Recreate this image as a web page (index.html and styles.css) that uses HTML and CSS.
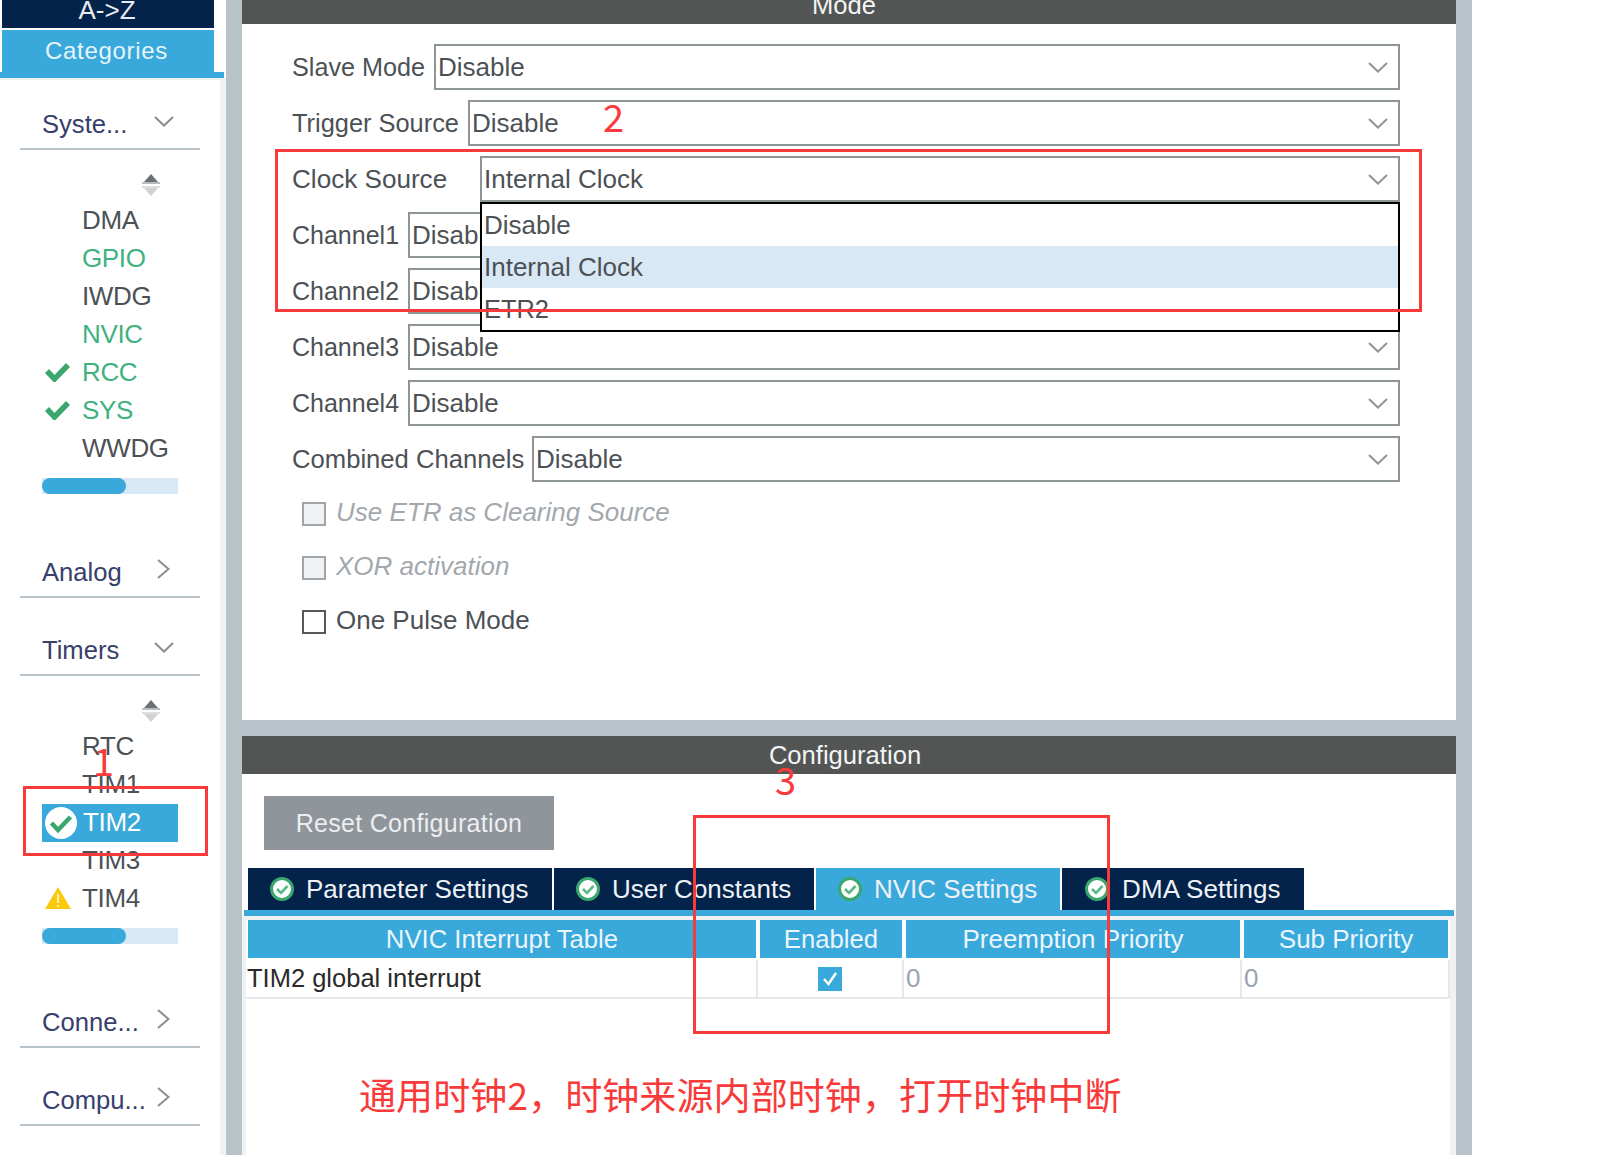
FILE: index.html
```html
<!DOCTYPE html>
<html lang="en">
<head>
<meta charset="utf-8">
<title>Timer configuration</title>
<link rel="stylesheet" href="styles.css">
</head>
<body>
<svg class="defs" width="0" height="0" aria-hidden="true">
  <defs>
    <symbol id="chev-down" viewBox="0 0 20 11"><path d="M1 1 L10 9.5 L19 1" fill="none" stroke="currentColor" stroke-width="2"/></symbol>
    <symbol id="chev-right" viewBox="0 0 13 20"><path d="M1 1 L11.5 10 L1 19" fill="none" stroke="currentColor" stroke-width="2"/></symbol>
    <symbol id="scroll" viewBox="0 0 18 22"><path d="M9 0 L16 8 H2 Z" fill="#6d7072"/><rect x="0" y="8" width="18" height="2" fill="#b9bcbe"/><rect x="0" y="12" width="18" height="2" fill="#dcdedf"/><path d="M2 14 H16 L9 22 Z" fill="#cfd1d2"/></symbol>
    <symbol id="tick" viewBox="0 0 25 20"><path d="M2 9 L9.5 17 L23 3" fill="none" stroke="#3ba76e" stroke-width="5.5"/></symbol>
    <symbol id="ok" viewBox="0 0 24 24"><circle cx="12" cy="12" r="10.5" fill="#fff" stroke="#3aa76e" stroke-width="3"/><path d="M7 12 L11 16 L17.5 9" fill="none" stroke="#57bb88" stroke-width="2.6"/></symbol>
    <symbol id="ok-white" viewBox="0 0 32 32"><circle cx="16" cy="16" r="16" fill="#fff"/><path d="M6.500 16 L13 23 L25.500 10" fill="none" stroke="#3ba76e" stroke-width="4.500"/></symbol>
  </defs>
</svg>
<div class="screen">
  <aside class="side">
    <div class="sort-tab">A-&gt;Z</div>
    <div class="cat-tab">Categories</div>
    <div class="cat-rule"></div>
    <div class="side-body">
      <section class="group group-first">
        <div class="group-head"><span>Syste...</span><svg class="chev-d"><use href="#chev-down"/></svg></div>
        <svg class="scroll"><use href="#scroll"/></svg>
        <ul class="items">
          <li class="item"><span class="slot"></span>DMA</li>
          <li class="item ready"><span class="slot"></span>GPIO</li>
          <li class="item"><span class="slot"></span>IWDG</li>
          <li class="item ready"><span class="slot"></span>NVIC</li>
          <li class="item ready"><span class="slot"><svg class="tick"><use href="#tick"/></svg></span>RCC</li>
          <li class="item ready"><span class="slot"><svg class="tick"><use href="#tick"/></svg></span>SYS</li>
          <li class="item"><span class="slot"></span>WWDG</li>
        </ul>
        <div class="track"><div class="thumb"></div></div>
      </section>
      <section class="group group-after-list">
        <div class="group-head"><span>Analog</span><svg class="chev-r"><use href="#chev-right"/></svg></div>
      </section>
      <section class="group group-after-head">
        <div class="group-head"><span>Timers</span><svg class="chev-d"><use href="#chev-down"/></svg></div>
        <svg class="scroll"><use href="#scroll"/></svg>
        <ul class="items">
          <li class="item"><span class="slot"></span>RTC</li>
          <li class="item"><span class="slot"></span>TIM1</li>
          <li class="item selected"><span class="slot"><svg class="ok-big"><use href="#ok-white"/></svg></span>TIM2</li>
          <li class="item"><span class="slot"></span>TIM3</li>
          <li class="item"><span class="slot"><svg class="warn" viewBox="0 0 26 22"><path d="M13 0 L26 22 H0 Z" fill="#fdc90b"/><rect x="12" y="7" width="2" height="9" fill="#fff3b8"/><rect x="12" y="18" width="2" height="2" fill="#fff3b8"/></svg></span>TIM4</li>
        </ul>
        <div class="track"><div class="thumb"></div></div>
      </section>
      <section class="group group-after-list">
        <div class="group-head"><span>Conne...</span><svg class="chev-r"><use href="#chev-right"/></svg></div>
      </section>
      <section class="group group-after-head">
        <div class="group-head"><span>Compu...</span><svg class="chev-r"><use href="#chev-right"/></svg></div>
      </section>
    </div>
  </aside>

  <main class="work">
    <section class="panel panel-mode">
      <h2 class="title title-mode">Mode</h2>
      <div class="form">
        <div class="row"><label class="lbl lbl-slave">Slave Mode</label><div class="select">Disable<svg class="chev-sel"><use href="#chev-down"/></svg></div></div>
        <div class="row"><label class="lbl lbl-trigger">Trigger Source</label><div class="select">Disable<svg class="chev-sel"><use href="#chev-down"/></svg></div></div>
        <div class="row row-open">
          <label class="lbl lbl-clock">Clock Source</label><div class="select">Internal Clock<svg class="chev-sel"><use href="#chev-down"/></svg></div>
          <ul class="menu">
            <li class="opt">Disable</li>
            <li class="opt opt-on">Internal Clock</li>
            <li class="opt opt-etr">ETR2</li>
          </ul>
        </div>
        <div class="row"><label class="lbl lbl-chan">Channel1</label><div class="select">Disable<svg class="chev-sel"><use href="#chev-down"/></svg></div></div>
        <div class="row"><label class="lbl lbl-chan">Channel2</label><div class="select">Disable<svg class="chev-sel"><use href="#chev-down"/></svg></div></div>
        <div class="row"><label class="lbl lbl-chan">Channel3</label><div class="select">Disable<svg class="chev-sel"><use href="#chev-down"/></svg></div></div>
        <div class="row"><label class="lbl lbl-chan">Channel4</label><div class="select">Disable<svg class="chev-sel"><use href="#chev-down"/></svg></div></div>
        <div class="row"><label class="lbl lbl-comb">Combined Channels</label><div class="select">Disable<svg class="chev-sel"><use href="#chev-down"/></svg></div></div>
        <div class="checks">
          <div class="check check-off"><span class="box"></span><span class="check-text">Use ETR as Clearing Source</span></div>
          <div class="check check-off"><span class="box"></span><span class="check-text">XOR activation</span></div>
          <div class="check"><span class="box"></span><span class="check-text">One Pulse Mode</span></div>
        </div>
      </div>
    </section>

    <section class="panel panel-config">
      <h2 class="title title-config">Configuration</h2>
      <button class="reset" type="button">Reset Configuration</button>
      <div class="tabs">
        <div class="tab tab-param"><svg class="ok"><use href="#ok"/></svg>Parameter Settings</div>
        <div class="tab tab-user"><svg class="ok"><use href="#ok"/></svg>User Constants</div>
        <div class="tab tab-nvic tab-on"><svg class="ok"><use href="#ok"/></svg>NVIC Settings</div>
        <div class="tab tab-dma"><svg class="ok"><use href="#ok"/></svg>DMA Settings</div>
      </div>
      <div class="tab-rule"></div>
      <div class="tab-body">
        <div class="table">
          <div class="th">NVIC Interrupt Table</div>
          <div class="th">Enabled</div>
          <div class="th th-wide">Preemption Priority</div>
          <div class="th th-wide">Sub Priority</div>
          <div class="td td-name">TIM2 global interrupt</div>
          <div class="td td-center"><span class="cb"><svg viewBox="0 0 24 24" class="cb-tick"><path d="M6 12 L10.500 17 L18 6" fill="none" stroke="#fff" stroke-width="2.400"/></svg></span></div>
          <div class="td td-num">0</div>
          <div class="td td-num">0</div>
        </div>
      </div>
    </section>
  </main>

  <div class="mark mark-clock"></div>
  <div class="mark mark-tim2"></div>
  <div class="mark mark-nvic"></div>
  <div class="num num-1">1</div>
  <div class="num num-2">2</div>
  <div class="num num-3">3</div>
  <div class="note">通用时钟2，时钟来源内部时钟，打开时钟中断</div>
</div>
</body>
</html>
```

FILE: styles.css
```css
* { box-sizing: border-box; }
html, body { margin: 0; padding: 0; background: #fff; }
body { font-family: "Liberation Sans", Arial, sans-serif; font-size: 26px; color: #4c5156; }
ul { list-style: none; margin: 0; padding: 0; }
.defs { position: absolute; }

.screen { position: relative; display: flex; width: 1617px; height: 1155px; overflow: hidden; background: #fff; }

/* sidebar */
.side { width: 226px; height: 100%; display: flex; flex-direction: column; flex: none; }
.sort-tab { width: 212px; height: 28px; margin: 0 0 2px 2px; background: #03234b; color: #e8edf2; text-align: center; line-height: 20px; overflow: hidden; padding-right: 2px; }
.cat-tab { width: 212px; height: 42px; margin-left: 2px; background: #39a8db; color: #e6f4fb; text-align: center; line-height: 42px; font-size: 24px; letter-spacing: .7px; padding-right: 3px; }
.cat-rule { width: 224px; height: 6px; background: #39a8db; }
.side-body { flex: 1; border-top: 2px solid #eff1f3; border-right: 6px solid #eff1f3; }
.group { margin: 0 20px; }
.group-first { margin-top: 20px; }
.group-after-list { margin-top: 54px; }
.group-after-head { margin-top: 28px; }
.group-head { display: flex; align-items: center; height: 50px; padding: 1px 0 0 22px; border-bottom: 2px solid #b7c2c9; color: #36406a; font-size: 25.6px; }
.chev-d { width: 20px; height: 11px; margin: 0 26px 7px auto; color: #8a8e91; }
.chev-r { width: 13px; height: 20px; margin: 0 30px 7px auto; color: #8a8e91; }
.scroll { display: block; width: 18px; height: 22px; margin: 24px 0 5px 122px; }
.items { margin-left: 22px; width: 136px; }
.item { display: flex; align-items: center; height: 38px; color: #4c5156; letter-spacing: -.35px; }
.item.ready { color: #3fb27f; }
.item.selected { margin: 1px 0 -1px; padding-bottom: 2px; background: #39a8db; color: #fff; }
.slot { display: flex; align-items: center; width: 40px; padding-left: 3px; flex: none; }
.selected .slot { width: 41px; margin-top: 2px; }
.tick { width: 25px; height: 20px; }
.ok-big { width: 32px; height: 32px; }
.warn { width: 26px; height: 22px; }
.track { height: 16px; margin: 11px 0 0 22px; width: 136px; background: #d9e8f5; }
.thumb { width: 84px; height: 16px; border-radius: 8px; background: #39a8db; }

/* main */
.work { display: flex; flex-direction: column; gap: 16px; width: 1246px; height: 100%; padding: 0 16px; background: #b7c2c9; flex: none; }
.panel { background: #fff; }
.panel-mode { height: 720px; flex: none; }
.panel-config { flex: 1; display: flex; flex-direction: column; align-items: flex-start; }
.title { margin: 0; font-weight: normal; font-size: 25.6px; background: #535554; color: #f2f4f5; text-align: center; padding-right: 8px; width: 100%; overflow: hidden; }
.title-mode { height: 24px; line-height: 10px; padding-right: 10px; }
.title-config { height: 38px; line-height: 38px; }

.form { display: flex; flex-direction: column; gap: 10px; padding: 20px 56px 0 50px; }
.row { position: relative; display: flex; height: 46px; align-items: center; }
.lbl { flex: none; }
.lbl-slave { width: 142px; font-size: 25.2px; }
.lbl-trigger { width: 176px; font-size: 25.4px; }
.lbl-clock { width: 188px; font-size: 26.1px; }
.lbl-chan { width: 116px; font-size: 25px; }
.lbl-comb { width: 240px; font-size: 25.650px; }
.select { position: relative; flex: 1; height: 46px; display: flex; align-items: center; padding-left: 2px; border: 2px solid #8e9599; background: #fff; }
.chev-sel { position: absolute; right: 10px; top: 16px; width: 20px; height: 11px; color: #8e9599; }
.menu { position: absolute; z-index: 2; top: 46px; left: 188px; right: 0; height: 130px; border: 2px solid #000; background: #fff; }
.opt { height: 42px; line-height: 42px; padding-left: 2px; }
.opt-on { background: #d9e8f5; }
.opt-etr { font-size: 25.4px; }
.checks { display: flex; flex-direction: column; gap: 30px; margin: 10px 0 0 10px; }
.check { display: flex; align-items: center; gap: 10px; height: 24px; color: #4c5156; }
.check-text { margin-top: -4px; }
.box { width: 24px; height: 24px; border: 2px solid #565a5d; background: #fff; flex: none; }
.check-off { font-style: italic; color: #a2a8ad; }
.check-off .box { border-color: #a0a5a9; background: #eff1f3; }

/* configuration */
.reset { width: 290px; height: 54px; margin: 22px 0 0 22px; border: 0; background: #8f959a; color: #eceef0; font: 25px "Liberation Sans", Arial, sans-serif; letter-spacing: .3px; padding: 0; }
.tabs { display: flex; gap: 2px; height: 42px; margin: 18px 0 0 6px; }
.tab { display: flex; align-items: center; height: 42px; background: #03234b; color: #eef2f6; flex: none; }
.tab-on { background: #39a8db; }
.tab .ok { width: 24px; height: 24px; margin-right: 12px; flex: none; }
.tab-param { width: 304px; padding-left: 22px; }
.tab-user { width: 260px; padding-left: 22px; }
.tab-nvic { width: 244px; padding-left: 22px; }
.tab-dma { width: 242px; padding-left: 23px; letter-spacing: .1px; }
.tab-dma .ok { margin-right: 13px; }
.tab-rule { width: 1210px; height: 6px; margin-left: 2px; background: #39a8db; }
.tab-body { align-self: stretch; flex: 1; border-left: 4px solid #eff1f3; border-right: 6px solid #eff1f3; border-top: 4px solid #eff1f3; }
.table { display: grid; grid-template-columns: 512px 146px 338px 208px; grid-template-rows: 38px 41px; }
.th { margin: 0 2px; background: #39a8db; color: #eaf6fc; text-align: center; line-height: 38px; font-size: 25.7px; }
.th-wide { font-size: 26px; }
.td { display: flex; align-items: center; margin-top: 2px; border-right: 2px solid #e6e9ec; border-bottom: 2px solid #e6e9ec; padding-left: 2px; }
.td-name { color: #2a2a2a; font-size: 25.500px; padding-left: 1px; }
.td-center { justify-content: center; padding: 0; }
.td-num { color: #9aa3b0; }
.cb { display: flex; width: 24px; height: 24px; background: #39a8db; }
.cb-tick { width: 24px; height: 24px; }

/* annotations drawn over the screenshot */
.mark { position: absolute; z-index: 5; border: 3px solid #f93a3a; pointer-events: none; }
.mark-clock { left: 275px; top: 149px; width: 1147px; height: 163px; }
.mark-tim2 { left: 23px; top: 786px; width: 185px; height: 70px; }
.mark-nvic { left: 693px; top: 815px; width: 417px; height: 219px; }
.num, .note { position: absolute; z-index: 6; color: #f93a3a; font-family: "Noto Sans CJK SC", "Noto Sans", sans-serif; white-space: nowrap; }
.num { font-size: 38px; line-height: 40px; font-weight: 400; }
.num-1 { left: 93px; top: 740px; }
.num-2 { left: 603px; top: 96px; }
.num-3 { left: 775px; top: 759px; }
.note { left: 359px; top: 1070px; font-size: 37px; line-height: 48px; letter-spacing: .1px; }
```
